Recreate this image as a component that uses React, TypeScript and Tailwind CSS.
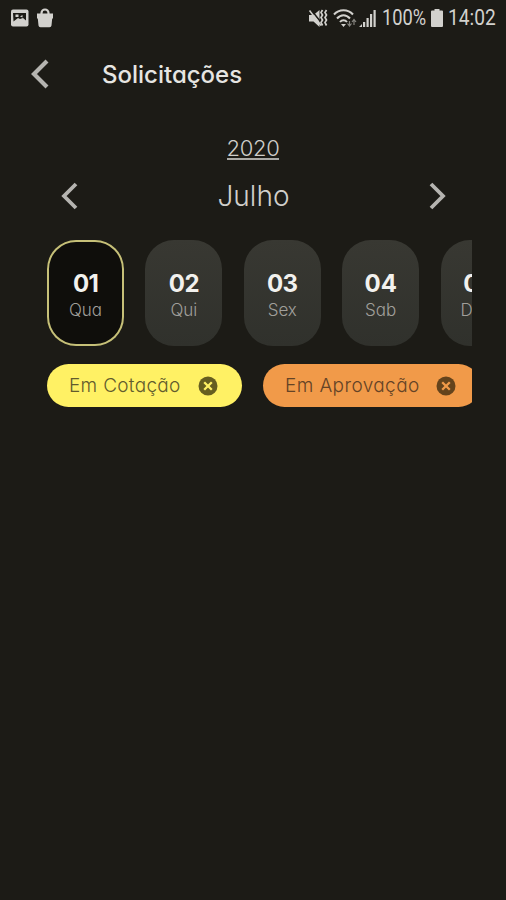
import React from 'react';

interface Day {
  num: string;
  label: string;
  numClass: string;
  selected?: boolean;
}

interface Status {
  label: string;
  /** Cor e largura do filtro */
  pillClass: string;
  textClass: string;
  iconClass: string;
  crossClass: string;
}

const DAYS: Day[] = [
  { num: '01', label: 'Qua', numClass: 'tracking-[-0.8px]', selected: true },
  { num: '02', label: 'Qui', numClass: 'tracking-[-0.5px]' },
  { num: '03', label: 'Sex', numClass: 'tracking-[-0.5px]' },
  { num: '04', label: 'Sab', numClass: '' },
  { num: '05', label: 'Dom', numClass: '' },
];

const STATUSES: Status[] = [
  {
    label: 'Em Cotação',
    pillClass: 'w-[195px] bg-[#fff164]',
    textClass: 'text-[#625b2d] tracking-[0.3px]',
    iconClass: 'fill-[#665e20]',
    crossClass: 'stroke-[#fff164]',
  },
  {
    label: 'Em Aprovação',
    pillClass: 'w-[217px] bg-[#f19a49]',
    textClass: 'text-[#644326] tracking-[0.4px]',
    iconClass: 'fill-[#64431c]',
    crossClass: 'stroke-[#f19a49]',
  },
];

const Chevron: React.FC<{ className: string; d: string; stroke?: number }> = ({ className, d, stroke = 4.2 }) => (
  <svg viewBox="0 0 20 30" className={className} fill="none" stroke="currentColor" strokeWidth={stroke}>
    <path d={d} />
  </svg>
);

/** Barra de status do aparelho */
const StatusBar: React.FC = () => (
  <div className="flex h-9 items-center pl-[10px] pr-[11px] text-[#d2d1cd]">
    <svg viewBox="0 0 20 18" className="h-[18px] w-5" fill="currentColor">
      <rect x="1" y="0.5" width="17.5" height="17" rx="2" />
      <path d="M3 4h13v7.500l-3-2.500-3 1-2-1-4.500 3.500z" fill="#1c1b16" />
      <path d="M5.500 5.500h3v2.500h-3zM10 7.500l2.500-1.500v2.500z" />
    </svg>
    <svg viewBox="0 0 18 20" className="ml-[6px] h-5 w-[18px]" fill="currentColor">
      <path d="M1 5.500h16v5h-.8L15.500 17.500a2 2 0 0 1-2 1.800h-9a2 2 0 0 1-2-1.800L1.800 10.500H1z" />
      <path d="M5.500 6.500V5a3.500 3.500 0 0 1 7 0v1.500" fill="none" stroke="currentColor" strokeWidth="2.200" />
    </svg>
    <div className="ml-auto flex items-center">
      <svg viewBox="0 0 20 20" className="h-5 w-5" fill="currentColor">
        <path d="M1 7h4.500L11.500 2v17L5.500 13.500H1z" />
        <path d="M2.500 1l11 14" stroke="#1c1b16" strokeWidth="1.500" />
        <path d="M1.500 2.500l11.500 15" stroke="currentColor" strokeWidth="1.500" />
        <path d="M14.500 2l-1.500 2.500L14.500 7l-1.500 2.500 1.500 2.500-1.500 2.500 1.500 3M18.500 2L17 4.500 18.500 7 17 9.500l1.500 2.500-1.500 2.500 1.500 3" fill="none" stroke="currentColor" strokeWidth="1.700" />
      </svg>
      <svg viewBox="0 0 24 20" className="ml-[5px] h-5 w-6" fill="none" stroke="currentColor" strokeWidth="2">
        <path d="M1 6.500C6 .8 15 .8 20 6.500M4 10.500c4-4.500 9-4.500 13 0M7 14c2-2.500 5-2.500 7 0" />
        <path d="M8 16h5l-2.500 3z" fill="currentColor" stroke="none" />
        <path d="M16.500 13v4M14.500 15.500l2 2.500 2-2.500M21 17v-5M19 14l2-2.500 2 2.500" stroke="#85847f" strokeWidth="1.200" />
      </svg>
      <svg viewBox="0 0 19 20" className="ml-px h-5 w-[19px]" fill="currentColor">
        <path d="M1 19l3-3v3zM5 14h2.200v5H5zM8.500 10h2.200v9H8.500zM12 6h2.200v13H12zM15.500 2h2.200v17h-2.200z" />
      </svg>
      <span className="ml-[5px] w-[43px] origin-left scale-x-[0.83] whitespace-nowrap font-['Roboto',sans-serif] text-[22px] leading-5">100%</span>
      <svg viewBox="0 0 12 20" className="ml-[6px] h-5 w-3" fill="currentColor">
        <path d="M3.500 1h5V2.500H11q1 0 1 1v14.500q0 1-1 1H1q-1 0-1-1V3.500q0-1 1-1h2.500z" />
      </svg>
      <span className="ml-[5px] w-[47px] origin-left scale-x-[0.87] whitespace-nowrap font-['Roboto',sans-serif] text-[22px] leading-5">14:02</span>
    </div>
  </div>
);

const DayCard: React.FC<{ day: Day }> = ({ day }) => (
  <div
    className={`flex h-[106px] w-[77px] shrink-0 flex-col items-center rounded-[29px] pt-[30px] ${
      day.selected
        ? 'bg-[#0f0e0b] shadow-[inset_0_0_0_2px_#c6c078]'
        : 'bg-linear-to-b from-[#383832] to-[#30312c]'
    }`}
  >
    <span className={`text-[24px] leading-7 font-bold text-[#f2f1ee] ${day.numClass}`}>{day.num}</span>
    <span className="text-[17px] leading-[25px] font-light text-[#a09f9a]">{day.label}</span>
  </div>
);

const StatusPill: React.FC<{ status: Status }> = ({ status }) => (
  <div className={`flex h-[43px] shrink-0 items-center justify-between rounded-full pl-[22px] pr-6 ${status.pillClass}`}>
    <span className={`whitespace-nowrap pt-px text-[19px] font-light ${status.textClass}`}>{status.label}</span>
    <svg viewBox="0 0 20 20" className="h-5 w-5">
      <circle cx="10" cy="10" r="9.500" className={status.iconClass} />
      <path d="M6.200 6.200l7.600 7.600M13.800 6.200l-7.600 7.600" className={status.crossClass} strokeWidth="2.300" />
    </svg>
  </div>
);

export default function App() {
  return (
    <div className="h-[900px] w-[506px] overflow-hidden bg-[#1c1b16] font-['Inter',sans-serif] [font-feature-settings:'cv11'_1]">
      <StatusBar />

      <header className="flex h-[76px] items-center">
        <Chevron className="ml-[30px] h-[30px] w-5 text-[#b5b4b0]" d="M17 2L4 15l13 13" />
        <h1 className="ml-[52px] whitespace-nowrap pt-0.5 text-[24px] font-medium text-[#e6e5e2]">Solicitações</h1>
      </header>

      <main className="pl-[47px] pr-[34px]">
        <div className="flex justify-center pt-[26px] pr-[13px]">
          <span className="border-b-2 border-[#aaa9a5] text-[22px] leading-[20px] font-light tracking-[-0.3px] text-[#cfceca]">2020</span>
        </div>

        <div className="mt-4 flex h-10 items-center justify-between pr-[25px] pl-[13px]">
          <Chevron className="h-[30px] w-5 text-[#b5b4b0]" d="M16 3L4 15l12 12" stroke={3.8} />
          <span className="text-[28px] font-light text-[#d0cfcb]">Julho</span>
          <Chevron className="h-[30px] w-5 text-[#b5b4b0]" d="M4 3l12 12L4 27" stroke={3.8} />
        </div>

        <div className="mt-6 flex gap-[21.400px] overflow-hidden">
          {DAYS.map((day) => (
            <DayCard key={day.num} day={day} />
          ))}
        </div>

        <div className="mt-[18px] flex gap-[21px] overflow-hidden">
          {STATUSES.map((status) => (
            <StatusPill key={status.label} status={status} />
          ))}
        </div>
      </main>
    </div>
  );
}
